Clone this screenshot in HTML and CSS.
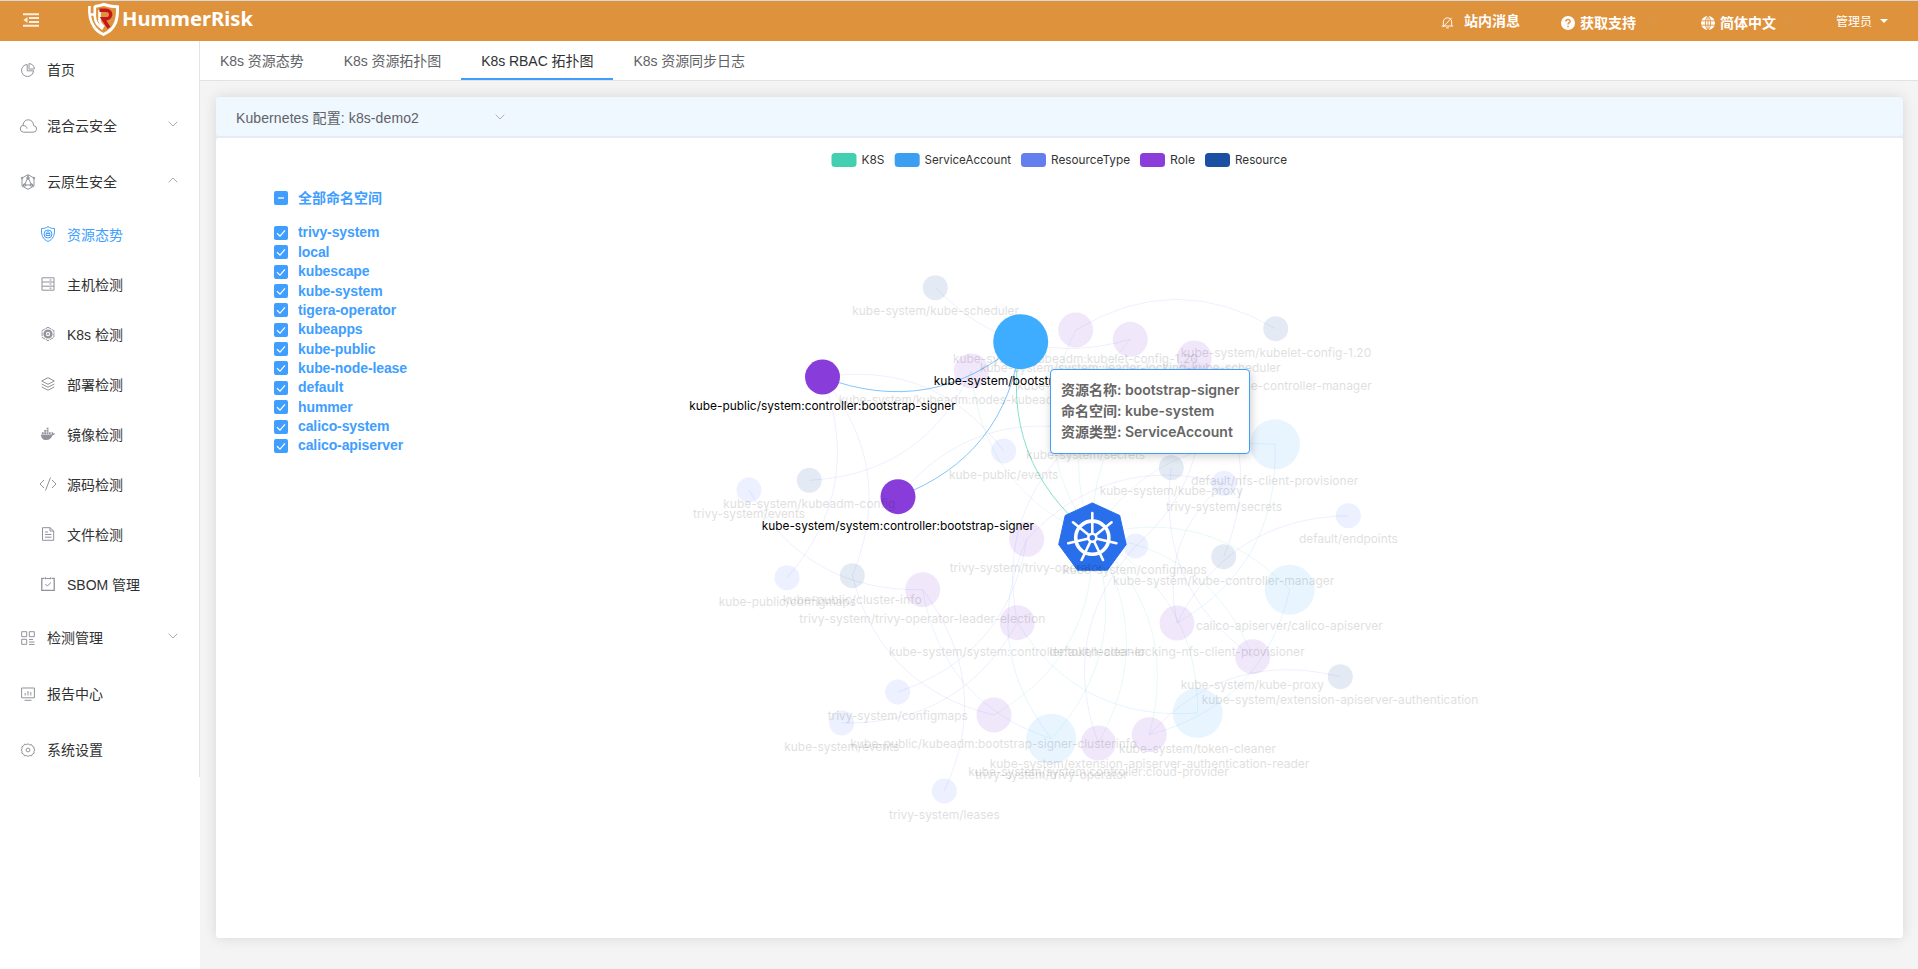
FILE: index.html
```html
<!DOCTYPE html>
<html lang="zh-CN">
<head>
<meta charset="utf-8">
<title>HummerRisk</title>
<link rel="stylesheet" href="styles.css">
</head>
<body>
<header class="topbar">
  <svg class="fold" viewBox="0 0 16 14"><path d="M0 1.2h16M6 5h10M6 9h10M0 12.8h16" stroke="#fbeee0" stroke-width="2" fill="none"/><path d="M4.5 4v6L.5 7z" fill="#fbeee0"/></svg>
  <svg class="logo" viewBox="0 0 170 38">
    <path d="M8.500 5.500C12 5.200 15 4.200 18 3.300c4 1.500 9 2.200 13.500 2.500.3 12-1 21.500-14 27.700C13 31.500 10 29 7.500 25" fill="none" stroke="#fff" stroke-width="3"/>
    <path d="M3.500 5c-.8 9 .5 15 4.500 20.500M8.800 5v10c0 6.500 3.500 9.500 8 13M3 13.500h5.500M13.500 9v11c1 3.500 2.500 4.500 4.500 6" fill="none" stroke="#fff" stroke-width="2.600"/>
    <path d="M13.500 9.300h6.500c6 0 6.300 8 .5 8.500h-3.500l6 9" fill="none" stroke="#c4161c" stroke-width="3.400"/>
    <text class="brand" x="36" y="25" textLength="131" lengthAdjust="spacingAndGlyphs">HummerRisk</text>
  </svg>
  <nav class="tools">
    <a class="tool tool-msg"><svg class="i-bell" viewBox="0 0 14 14"><path d="M2.500 10.500V6.500a4.500 4.500 0 0 1 9 0v4M.8 10.800h12.400M5.500 12.800h3M2 12 11.500 2" fill="none" stroke="#fff"/></svg><span>站内消息</span></a>
    <a class="tool tool-help"><svg class="i14" viewBox="0 0 14 14"><circle cx="7" cy="7" r="7" fill="#fff"/><path d="M4.900 5.600c0-2.900 4.300-2.700 4.200-.2 0 1.500-2.100 1.500-2.100 3M7 9.700v1.600" fill="none" stroke="#df923c" stroke-width="1.500"/></svg><span>获取支持</span><svg class="chev" viewBox="0 0 10 6"><path d="M.7.7 5 5 9.300.7"/></svg></a>
    <a class="tool tool-lang"><svg class="i14" viewBox="0 0 14 14"><circle cx="7" cy="7" r="7" fill="#fff"/><path d="M0 4.800h14M0 9.200h14M7 0v14M7 0C3.500 3 3.500 11 7 14M7 0c3.500 3 3.500 11 0 14" fill="none" stroke="#df923c" stroke-width=".9"/></svg><span>简体中文</span><svg class="chev" viewBox="0 0 10 6"><path d="M.7.7 5 5 9.300.7"/></svg></a>
    <a class="tool tool-user"><span>管理员</span><i class="caret"></i></a>
  </nav>
</header>
<div class="layout">
  <aside class="side">
    <ul class="menu">
      <li class="item"><svg viewBox="0 0 14 14"><path d="M6.200 1.500a6 6 0 1 0 6.300 6.300H6.200zM8 .6V6h5.400A5.500 5.500 0 0 0 8 .6z"/></svg><span>首页</span></li>
      <li class="item"><svg class="wide" viewBox="0 0 18 14"><path d="M4.500 13.200h9.500a3.300 3.300 0 0 0 .6-6.600C14.500-1 4.300-1.200 4 6.300a3.500 3.500 0 0 0 .5 6.900zM4 6.500c3 .1 4 1.800 4 3.200"/></svg><span>混合云安全</span><svg class="arrow" viewBox="0 0 10 6"><path d="M.7.7 5 5 9.300.7"/></svg></li>
      <li class="item"><svg class="tall" viewBox="0 0 16 16"><path d="M8 .7 14 4v8l-6 3.300L2 12V4zM8 3.500 4.500 11h7zM8 3.500V.7M4.500 11 2 12.500M11.500 11l2.500 1.500"/><circle cx="8" cy="4" r="1.300"/><circle cx="4.600" cy="11" r="1.300"/><circle cx="11.400" cy="11" r="1.300"/><circle cx="2" cy="4" r=".8"/><circle cx="14" cy="4" r=".8"/></svg><span>云原生安全</span><svg class="arrow" viewBox="0 0 10 6"><path d="M.7 5.300 5 1 9.300 5.300"/></svg></li>
      <li class="item sub on"><svg class="tall" viewBox="0 0 16 16"><path d="M8 .6c2 1.400 4 2 6.500 2C14.800 9 13.500 13 8 15.500 2.500 13 1.200 9 1.500 2.600 4 2.600 6 2 8 .6z"/><circle cx="8" cy="8" r="4"/><path d="M6 9.500h4v-2H6zM6.500 7.500c0-2.500 3-2.500 3 0"/></svg><span>资源态势</span></li>
      <li class="item sub"><svg viewBox="0 0 14 14"><path d="M1 .8h12v12.400H1zM1 5h12M1 9.200h12M8.500 3h2M8.500 7h2M8.500 11.200h2"/></svg><span>主机检测</span></li>
      <li class="item sub"><svg viewBox="0 0 14 14"><path d="M7 .3 12.900 3.600v6.800L7 13.700l-5.900-3.300V3.600z" stroke-dasharray="4 .7"/><circle cx="7" cy="7" r="3.400" stroke-width="2.400"/><circle cx="7" cy="7" r=".8"/></svg><span>K8s 检测</span></li>
      <li class="item sub"><svg viewBox="0 0 14 14"><path d="M7 .7 13.300 4 7 7.300.7 4zM.7 7 7 10.200 13.300 7M.7 10 7 13.200 13.300 10"/></svg><span>部署检测</span></li>
      <li class="item sub"><svg viewBox="0 0 14 14"><path class="solid" d="M0 7.500h10.500c.3-.6.300-1.400 0-2l.6-.7c.6.500.9 1 1 1.600.7-.1 1.400 0 1.900.3-.5.900-1.300 1.300-2.300 1.300C10.500 11 8.500 13 5 13 2 13 0 11 0 7.500zM.8 5.200h1.900v1.700H.8zM3.200 5.200h1.900v1.700H3.200zM5.600 5.200h1.900v1.700H5.600zM8 5.200h1.700v1.700H8zM3.200 3h1.900v1.700H3.200zM5.600 3h1.900v1.700H5.600zM5.600.8h1.900v1.700H5.600z"/></svg><span>镜像检测</span></li>
      <li class="item sub"><svg class="code" viewBox="0 0 18 14"><path d="M5 3 1 7l4 4M13 3l4 4-4 4M11.500.5l-5 13"/></svg><span>源码检测</span></li>
      <li class="item sub"><svg viewBox="0 0 14 14"><path d="M1.500.7H9L12.700 4v9.300H1.500zM9 .7V4h3.700M4 5h3M4 7.500h6.500M4 10.200h6.500"/></svg><span>文件检测</span></li>
      <li class="item sub"><svg viewBox="0 0 14 14"><path d="M3.500 1.300H.8v12h12.400v-12h-2.700" stroke-width="1.300"/><path d="M4 1.500h6M4.500.3v2M9.500.3v2M4.300 7l2 2L10 5.500"/></svg><span>SBOM 管理</span></li>
      <li class="item"><svg viewBox="0 0 14 14"><path d="M.7.7h5v5h-5zM8.300.7h5v5h-5zM.7 8.300h5v5h-5zM8 8.500h4M8 11h5.500M8 13.400h5.500"/></svg><span>检测管理</span><svg class="arrow" viewBox="0 0 10 6"><path d="M.7.7 5 5 9.300.7"/></svg></li>
      <li class="item"><svg viewBox="0 0 14 14"><path d="M.6 1h12.800v9.800H.6zM3.500 13.300h7M4.200 6v2.500M7 4v4.500M9.800 5v3.500"/></svg><span>报告中心</span></li>
      <li class="item"><svg viewBox="0 0 14 14"><path d="M7 .8l1.600 1.100 1.900-.3.900 1.700 1.700.9-.2 1.900L14 7l-1.100 1.300.2 1.900-1.700.9-.9 1.700-1.900-.3L7 13.400l-1.600-.9-1.900.3-.9-1.700-1.700-.9.200-1.900L.3 7l.8-1.300-.2-1.900 1.700-.9.900-1.700 1.900.3z"/><circle cx="7" cy="7" r="1.900"/></svg><span>系统设置</span></li>
    </ul>
  </aside>
  <main class="main">
    <nav class="tabs">
      <a class="tab">K8s 资源态势</a><a class="tab">K8s 资源拓扑图</a><a class="tab active">K8s RBAC 拓扑图</a><a class="tab">K8s 资源同步日志</a>
    </nav>
    <section class="panel">
      <div class="panel-head"><span>Kubernetes 配置: k8s-demo2</span><svg class="select-arrow" viewBox="0 0 10 6"><path d="M.7.7 5 5 9.300.7"/></svg></div>
      <div class="panel-body">
        <svg class="graph" id="graph" viewBox="216 138 1687 800"></svg>
        <div class="filter">
          <label class="check all"><i class="box"><svg viewBox="0 0 14 14"><path d="M4 7h6" stroke="#b9dcff" stroke-width="2"/></svg></i><span>全部命名空间</span></label>
          <div class="names" id="names"></div>
        </div>
        <div class="tooltip"><div>资源名称: bootstrap-signer</div><div>命名空间: kube-system</div><div>资源类型: ServiceAccount</div></div>
      </div>
    </section>
  </main>
</div>
<script src="graph.js"></script>
</body>
</html>
```
FILE: styles.css
```css
* { box-sizing: border-box; }
body { margin: 0; height: 969px; overflow: hidden; background: #f4f4f4; color: #303133; font: 14px "Liberation Sans", "Noto Sans CJK SC", sans-serif; display: flex; flex-direction: column; }
ul { list-style: none; margin: 0; padding: 0; }
.topbar { height: 41px; flex: none; background: #df923c; border-top: 1px solid #d8d8d8; display: flex; align-items: flex-start; color: #fff; }
.fold { width: 16px; height: 14px; margin: 12px 0 0 23px; }
.logo { width: 170px; height: 38px; margin-left: 47px; overflow: visible; }
.brand { font: 700 20px "Noto Sans", sans-serif; fill: #fff; }
.tools { display: flex; margin-left: auto; width: 478px; }
.tool { display: flex; align-items: center; height: 20px; font-weight: 700; white-space: nowrap; }
.tool span { margin-top: -2px; }
.tool-msg { margin-top: 10px; width: 121px; }
.tool-help { margin-top: 12px; width: 140px; }
.tool-lang { margin-top: 12px; width: 135px; }
.tool-user { margin-top: 10px; font-size: 12px; font-weight: 400; }
.i-bell { width: 13px; height: 13px; margin: 3px 10px 0 1px; }
.i14 { width: 14px; height: 14px; margin-right: 5px; }
.chev, .arrow, .select-arrow { width: 10px; height: 6px; fill: none; stroke: #b0afac; }
.chev { margin: -4px 0 0 9px; stroke: #c69b69; }
.caret { border: 4px solid transparent; border-top-color: #fff; border-bottom: 0; margin-left: 8px; }
.layout { flex: 1; display: flex; min-height: 0; }
.side { width: 200px; background: #fff; flex: none; }
.menu { height: 736px; border-right: 1px solid #e4e4e4; }
.item { height: 56px; padding: 2px 20px 0; display: flex; align-items: center; }
.item span { margin-top: -2px; }
.item.sub { height: 50px; padding-left: 40px; padding-top: 0; }
.item.sub span { margin-top: 0; }
.item > svg { width: 14px; height: 14px; margin: 0 12px 0 1px; fill: none; stroke: #909399; stroke-width: 1; overflow: visible; }
.item > svg.wide { width: 18px; height: 14px; margin: 0 10px 0 -1px; }
.item > svg.tall { width: 16px; height: 16px; margin: 0 11px 0 0; }
.item > svg.code { width: 18px; height: 14px; margin: 0 10px 0 -1px; }
.item > svg.arrow { width: 10px; height: 6px; margin: -5px 1px 0 auto; stroke: #a6a9ad; }
.item .solid { fill: #909399; stroke: none; }
.item.on { color: #409eff; }
.item.on > svg { stroke: #409eff; }
.main { flex: 1; min-width: 0; }
.tabs { height: 40px; background: #fff; border-bottom: 1px solid #e2e2e2; display: flex; color: #606266; }
.tab { height: 39px; line-height: 40px; padding: 0 20px; white-space: nowrap; letter-spacing: -.05px; }
.tab.active { color: #303133; border-bottom: 2px solid #409eff; }
.panel { margin: 16px 15px 0 16px; box-shadow: 0 0 14px rgba(0,0,0,.12); border-radius: 3px; background: #e7ebf3; }
.panel-head { height: 39px; background: #eff7ff; border-radius: 3px; display: flex; align-items: center; padding: 3px 20px 0; color: #606266; }
.panel-head span { width: 259px; margin-top: -2px; letter-spacing: .1px; }
.select-arrow { margin-top: -3px; }
.panel-body { height: 800px; margin-top: 2px; background: #fff; border-radius: 3px; display: grid; position: relative; }
.graph { grid-area: 1 / 1; width: 1687px; height: 800px; font: 12px Inter, "Noto Sans CJK SC", sans-serif; }
.filter { grid-area: 1 / 1; align-self: start; padding: 50px 0 0 58px; width: 260px; }
.check { display: flex; align-items: center; height: 19.36px; color: #409eff; font-weight: 700; letter-spacing: -.1px; }
.check span { margin-top: -1px; }
.check.all { height: 20px; letter-spacing: 0; }
.check.all span { margin-top: -2px; }
.names { margin-top: 15.300px; }
.box { width: 14px; height: 14px; background: #409eff; border-radius: 2px; margin-right: 10px; flex: none; }
.box svg { display: block; width: 14px; height: 14px; fill: none; }
.tooltip { position: absolute; left: 834px; top: 231px; width: 200px; height: 85px; border: 1px solid #409eff; border-radius: 4px; background: #fff; padding: 9px 10px; color: #666; font: 600 14px/21px Inter, "Noto Sans CJK SC", sans-serif; white-space: nowrap; box-shadow: 1px 2px 10px rgba(0,0,0,.2); }
.edge { fill: none; stroke-width: 1; }
.edge.faded, .node.faded { opacity: .12; }
.label { text-anchor: middle; fill: #000; }
.label.faded { opacity: .125; }
.legend-text { fill: #333; }
.edge.k8s { stroke: #43d0b0; } .edge.sa { stroke: #3ba9fa; } .edge.role { stroke: #8a70f0; }
.edge.active { opacity: .65; }
.node.sa { fill: #3eadff; } .node.role { fill: #883ddb; } .node.type { fill: #6680ff; } .node.res { fill: #1d50a8; }
```
FILE: graph.js
```js
const NS = "http://www.w3.org/2000/svg";
const svg = document.getElementById("graph");
function add(tag, attrs, text) {
  const el = document.createElementNS(NS, tag);
  for (const k in attrs) el.setAttribute(k, attrs[k]);
  if (text) el.textContent = text;
  svg.appendChild(el);
  return el;
}
const radius = { sa: 25, role: 17.5, type: 12.5, res: 12.5 };
// id, kind, x, y, label, label centre y, label left, label right
const nodes = [
  ["sched", "res", 935.3, 287.7, "kube-system/kube-scheduler", 311, 852.3, 1019],
  ["kubelet", "role", 1075.7, 330, "kube-system/kubeadm:kubelet-config-1.20", 358.7, 953, 1197.7],
  ["lsched", "role", 1130.3, 339.3, "kube-system/system::leader-locking-kube-scheduler", 368, 980, 1280.7],
  ["lctrl", "role", 1194.3, 358, "kube-system/system::leader-locking-kube-controller-manager", 386, 1017, 1371.7],
  ["nodes", "role", 971.3, 371, "kube-system/kubeadm:nodes-kubeadm-config", 400, 838.7, 1104],
  ["kcfg", "res", 1275.7, 328.7, "kube-system/kubelet-config-1.20", 353, 1180.7, 1371.3],
  ["pevents", "type", 1003.7, 451, "kube-public/events", 474.7, 949, 1058.3],
  ["secrets", "type", 1086, 431, "kube-system/secrets", 455, 1026.3, 1145],
  ["admcfg", "res", 809.3, 480.3, "kube-system/kubeadm-config", 504, 723.3, 895.3],
  ["tevents", "type", 749, 490, "trivy-system/events", 514, 693, 805],
  ["top", "role", 1026.7, 539.3, "trivy-system/trivy-operator", 568, 949.7, 1103],
  ["nfs", "sa", 1275, 444.3, "default/nfs-client-provisioner", 480.7, 1191, 1358.3],
  ["proxy", "res", 1171.3, 467.7, "kube-system/kube-proxy", 491, 1099.7, 1243],
  ["tsecrets", "type", 1224, 483.3, "trivy-system/secrets", 507, 1166, 1282],
  ["endp", "type", 1348.3, 515.7, "default/endpoints", 539, 1299, 1397.7],
  ["scfg", "type", 1135.7, 546, "kube-system/configmaps", 570, 1063.3, 1206.7],
  ["ctrl", "res", 1223.7, 556.7, "kube-system/kube-controller-manager", 581, 1113, 1334.3],
  ["calico", "sa", 1289.7, 589.7, "calico-apiserver/calico-apiserver", 626, 1196, 1382.7],
  ["lnfs", "role", 1177, 623, "default/leader-locking-nfs-client-provisioner", 652, 1049.6, 1304.7],
  ["rproxy", "role", 1252.7, 656.7, "kube-system/kube-proxy", 685, 1180.7, 1324],
  ["ext", "res", 1340.3, 676.7, "kube-system/extension-apiserver-authentication", 700, 1201.7, 1478.3],
  ["token", "sa", 1197.7, 713, "kube-system/token-cleaner", 749, 1119, 1276],
  ["reader", "role", 1149.3, 734.7, "kube-system/extension-apiserver-authentication-reader", 764, 989.7, 1309.3],
  ["cloud", "role", 1098.3, 743, "kube-system/system:controller:cloud-provider", 772, 968.3, 1228.7],
  ["trivy", "sa", 1051.3, 738.7, "trivy-system/trivy-operator", 775, 975, 1127.7],
  ["pcfg", "type", 787, 577.7, "kube-public/configmaps", 602, 718.7, 856],
  ["cinfo", "res", 852.3, 575.7, "kube-public/cluster-info", 600, 782.7, 921.7],
  ["lead", "role", 922.7, 589.7, "trivy-system/trivy-operator-leader-election", 619, 799.3, 1045.3],
  ["rtoken", "role", 1017.3, 622.7, "kube-system/system:controller:token-cleaner", 652, 889, 1145.6],
  ["tcfg", "type", 897.7, 692, "trivy-system/configmaps", 716, 827.7, 967.7],
  ["sevents", "type", 841.7, 723, "kube-system/events", 747, 784.3, 899.3],
  ["clinfo", "role", 994, 715, "kube-public/kubeadm:bootstrap-signer-clusterinfo", 744, 850.3, 1137],
  ["leases", "type", 944.3, 791, "trivy-system/leases", 815, 889, 999.7],
  ["pub", "role", 822.5, 377, "kube-public/system:controller:bootstrap-signer", 406, 689.3, 955.7],
  ["sys", "role", 898, 496.7, "kube-system/system:controller:bootstrap-signer", 526, 761.7, 1034],
  ["boot", "sa", 1020.7, 341.7, "kube-system/bootstrap-signer", 381, 933.7, 1108]
];
const pos = { k8s: [1092.3, 536] };
const kind = { k8s: "k8s" };
nodes.forEach(n => { pos[n[0]] = [n[2], n[3]]; kind[n[0]] = n[1]; });
const active = new Set(["pub", "sys", "boot"]);
const edges = `kubelet-kcfg lsched-sched nodes-admcfg pub-pevents pub-pcfg pub-cinfo clinfo-cinfo sys-secrets top-tcfg
lead-tevents lead-leases trivy-lead trivy-top rtoken-sevents rtoken-secrets top-tsecrets rproxy-proxy lctrl-ctrl lctrl-scfg
cloud-scfg calico-reader nfs-lnfs lnfs-endp lnfs-tsecrets reader-ext token-rtoken k8s-nfs k8s-calico k8s-token k8s-trivy
k8s-cloud k8s-reader k8s-rproxy k8s-clinfo k8s-nodes k8s-kubelet k8s-lsched k8s-lctrl`.split(/\s+/);
function edge(pair, state) {
  const [a, b] = pair.split("-"), [x1, y1] = pos[a], [x2, y2] = pos[b];
  const cx = (x1 + x2) / 2 - (y1 - y2) * .3, cy = (y1 + y2) / 2 - (x2 - x1) * .3;
  add("path", { class: `edge ${kind[a]} ${state}`, d: `M${x1} ${y1}Q${cx} ${cy} ${x2} ${y2}` });
}
function circle(n) {
  const on = active.has(n[0]);
  add("circle", { class: `node ${n[1]} ${on ? "active" : "faded"}`, cx: n[2], cy: n[3], r: n[0] === "boot" ? 27.5 : radius[n[1]] });
}
function label(n) {
  add("text", { class: `label ${active.has(n[0]) ? "active" : "faded"}`, x: (n[6] + n[7]) / 2, y: n[5] + 4.3, textLength: n[7] - n[6], lengthAdjust: "spacingAndGlyphs" }, n[4]);
}
// text, swatch x, text x, text width, colour
[["K8S", 831.5, 861.5, 23, "#43d0b0"], ["ServiceAccount", 894.7, 924.5, 86.5, "#3a9ff3"], ["ResourceType", 1021, 1051, 79, "#647eee"], ["Role", 1140, 1170, 25, "#893edb"], ["Resource", 1205, 1235, 52, "#1b4fa4"]].forEach(([t, sx, x, w, c]) => {
  add("rect", { x: sx, y: 153, width: 25, height: 14, rx: 3.5, fill: c });
  add("text", { class: "legend-text", x, y: 164.2, textLength: w, lengthAdjust: "spacingAndGlyphs" }, t);
});
edges.forEach(e => edge(e, "faded"));
nodes.filter(n => !active.has(n[0])).forEach(circle);
["boot-pub", "boot-sys", "k8s-boot"].forEach(e => edge(e, "active"));
nodes.filter(n => n[0] === "pub" || n[0] === "sys").forEach(circle);
// Kubernetes wheel
add("path", { d: "M1092.3 502.900 1119.700 515.500 1126.200 544.500 1107.400 570.200H1077.600L1058.700 544.500 1065.200 515.500z", fill: "#296fec", stroke: "#296fec", "stroke-width": 1, "stroke-linejoin": "round" });
add("circle", { cx: 1092.3, cy: 537.7, r: 16.6, fill: "none", stroke: "#fff", "stroke-width": 3.6 });
for (let i = 0; i < 7; i++) {
  add("path", { d: "M1092.3 534V513", stroke: "#fff", "stroke-width": 2.6, "stroke-linecap": "round", transform: `rotate(${i * 360 / 7} 1092.3 537.7)` });
}
add("circle", { cx: 1092.3, cy: 537.7, r: 4, fill: "#296fec", stroke: "#fff", "stroke-width": 2.6 });
nodes.filter(n => !active.has(n[0])).forEach(label);
circle(nodes[nodes.length - 1]);
nodes.filter(n => active.has(n[0])).forEach(label);

document.getElementById("names").innerHTML = ["trivy-system", "local", "kubescape", "kube-system", "tigera-operator", "kubeapps", "kube-public", "kube-node-lease", "default", "hummer", "calico-system", "calico-apiserver"]
  .map(n => `<label class="check"><i class="box"><svg viewBox="0 0 14 14"><path d="M3 7.300 6 10.200 11 4.300" stroke="#fff" stroke-width="1.200"/></svg></i><span>${n}</span></label>`).join("");
```
